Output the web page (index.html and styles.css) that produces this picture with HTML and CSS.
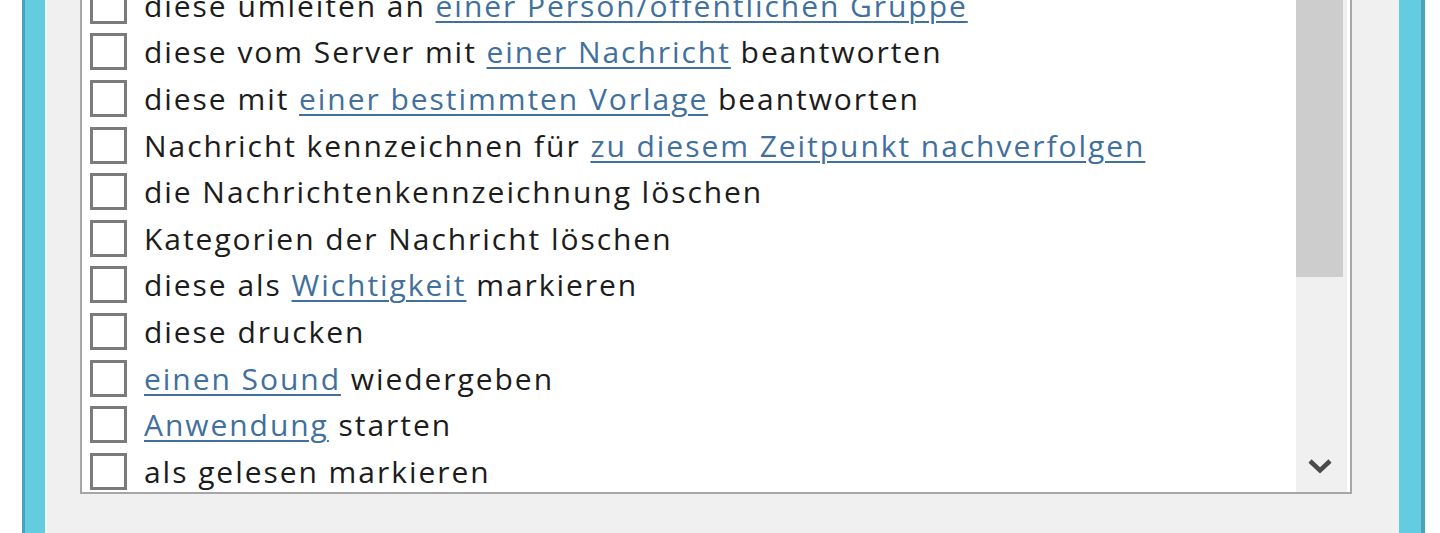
FILE: index.html
```html
<!DOCTYPE html>
<html>
<head>
    <title>Regeln</title>
    <link rel="stylesheet" href="styles.css">
</head>
<body>
    <div class="frame">
        <div class="dialog">
            <div class="listbox">
                <div class="items">
                    <div class="row"><span class="box"></span><span>diese umleiten an <a href="#">einer Person/öffentlichen Gruppe</a></span></div>
                    <div class="row"><span class="box"></span><span>diese vom Server mit <a href="#">einer Nachricht</a> beantworten</span></div>
                    <div class="row"><span class="box"></span><span>diese mit <a href="#">einer bestimmten Vorlage</a> beantworten</span></div>
                    <div class="row"><span class="box"></span><span>Nachricht kennzeichnen für <a href="#">zu diesem Zeitpunkt nachverfolgen</a></span></div>
                    <div class="row"><span class="box"></span><span>die Nachrichtenkennzeichnung löschen</span></div>
                    <div class="row"><span class="box"></span><span>Kategorien der Nachricht löschen</span></div>
                    <div class="row"><span class="box"></span><span>diese als <a href="#">Wichtigkeit</a> markieren</span></div>
                    <div class="row"><span class="box"></span><span>diese drucken</span></div>
                    <div class="row"><span class="box"></span><span><a href="#">einen Sound</a> wiedergeben</span></div>
                    <div class="row"><span class="box"></span><span><a href="#">Anwendung</a> starten</span></div>
                    <div class="row"><span class="box"></span><span>als gelesen markieren</span></div>
                </div>
                <div class="scrollbar">
                    <div class="thumb"></div>
                    <div class="track"></div>
                    <div class="arrow">
                        <svg width="26" height="16" viewBox="0 0 26 16">
                            <path d="M3 3 L13 12.5 L23 3" fill="none" stroke="#4a4a4a" stroke-width="4.5"/>
                        </svg>
                    </div>
                </div>
            </div>
        </div>
    </div>
</body>
</html>
```

FILE: styles.css
```css
body { margin: 0; background: #fff; font-family: "Open Sans", "Noto Sans", sans-serif; overflow: hidden; }
.frame { margin-left: 22px; width: 1403px; height: 533px; display: flex; }
.dialog { flex: 1; height: 533px; background: #f0f0f0; border-left: 23px solid #64cce0; border-right: 26px solid #64cce0; box-shadow: inset 2px 0 0 #f8f8f8; position: relative; }
.dialog::before { content: ""; position: absolute; left: -23px; top: 0; bottom: 0; width: 3px; background: #4aa3b8; }
.dialog::after { content: ""; position: absolute; right: -26px; top: 0; bottom: 0; width: 4px; background: #4aa3b8; }
.listbox { display: flex; margin: -18px 0 0 35px; width: 1268px; height: 510px; border: 2px solid #a6a6a6; border-top: none; background: #fff; overflow: hidden; }
.items { flex: 1; padding-left: 8px; }
.row { display: flex; align-items: center; height: 46.6px; font-size: 30px; letter-spacing: 1.95px; color: #1c1c1c; white-space: nowrap; }
.row a { color: #41709e; text-decoration: underline; text-underline-offset: 4px; text-decoration-thickness: 2px; }
.box { width: 31px; height: 31px; border: 3px solid #7b7b7b; background: #fff; margin-right: 17px; flex: none; }
.scrollbar { width: 51px; margin-right: 3px; display: flex; flex-direction: column; background: #f0f0f0; }
.thumb { height: 295px; width: 47px; background: #cdcdcd; flex: none; }
.track { flex: 1; }
.arrow { height: 52px; display: flex; justify-content: center; align-items: center; padding-right: 4px; }
```
